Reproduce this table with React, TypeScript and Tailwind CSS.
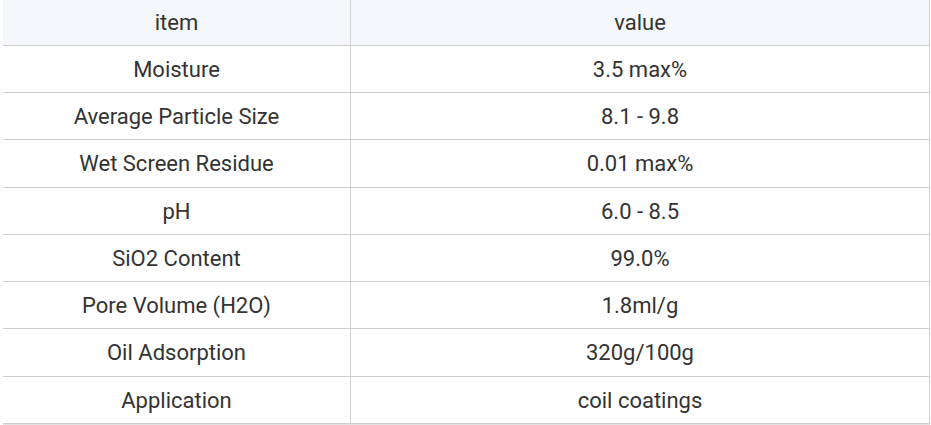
const rows = [
  { item: "Moisture", value: "3.5 max%", h: "h-[47px]" },
  { item: "Average Particle Size", value: "8.1 - 9.8", h: "h-[47px]" },
  { item: "Wet Screen Residue", value: "0.01 max%", h: "h-[48px]" },
  { item: "pH", value: "6.0 - 8.5", h: "h-[47px]" },
  { item: "SiO2 Content", value: "99.0%", h: "h-[47px]" },
  { item: "Pore Volume (H2O)", value: "1.8ml/g", h: "h-[47px]" },
  { item: "Oil Adsorption", value: "320g/100g", h: "h-[48px]" },
  { item: "Application", value: "coil coatings", h: "h-[46px]" },
];

export default function App() {
  return (
    <div className="w-[931px] h-[425px] bg-white overflow-hidden font-['Roboto',sans-serif] text-[22px] text-[#333]">
      <div className="ml-[3px] w-[927px] border-r border-b border-[#cfcfcf] shadow-[0_1px_0_#e2e2e2]">
        {/* header */}
        <div className="flex h-[46px] bg-[#f5f7fa] border-b border-[#cfcfcf]">
          <div className="w-[348px] flex items-center justify-center border-r border-[#cfcfcf]">item</div>
          <div className="flex-1 flex items-center justify-center">value</div>
        </div>
        {rows.map((r, i) => (
          <div
            key={r.item}
            className={`flex ${r.h} ${i < rows.length - 1 ? "border-b border-[#cfcfcf]" : ""}`}
          >
            <div className="w-[348px] flex items-center justify-center border-r border-[#cfcfcf]">{r.item}</div>
            <div className="flex-1 flex items-center justify-center">{r.value}</div>
          </div>
        ))}
      </div>
    </div>
  );
}
